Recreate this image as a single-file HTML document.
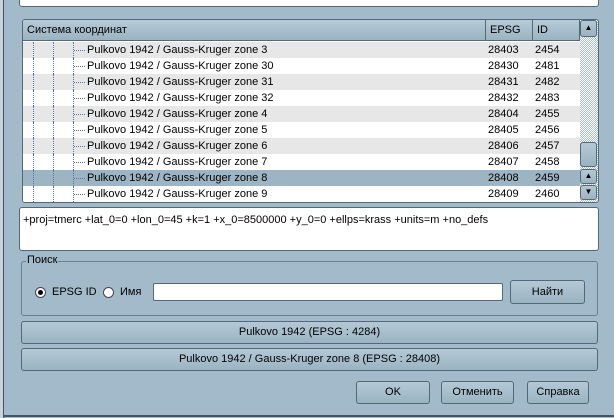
<!DOCTYPE html>
<html><head><meta charset="utf-8"><style>
*{box-sizing:border-box;margin:0;padding:0}
body{width:614px;height:418px;overflow:hidden;background:#a2bac9;font-family:"Liberation Sans","DejaVu Sans",sans-serif;font-size:11px;color:#000;position:relative}
.abs{position:absolute}
.btn{position:absolute;border:1px solid #55687a;border-radius:3px;background:linear-gradient(#b4c9d6,#9bb3c2);text-align:center;line-height:21px}
.row{position:absolute;left:1px;width:557px;height:16px;line-height:16px}
.cell{position:absolute;top:0}
</style></head><body>
<div class="abs" style="left:0;top:0;width:4px;height:418px;background:#c9d3dc"></div>
<div class="abs" style="left:3px;top:0;width:1px;height:418px;background:#445566"></div>
<div class="abs" style="left:3px;top:415px;width:611px;height:2px;background:#445566"></div>
<div class="abs" style="left:19px;top:-3px;width:580px;height:10px;background:#fff;border:1px solid #55687a;border-radius:3px"></div>
<!-- table -->
<div class="abs" style="left:22px;top:19px;width:577px;height:184px;border:1px solid #55687a;border-radius:3px;background:#fff;overflow:hidden">
 <div class="abs" style="left:0;top:0;width:463px;height:21px;background:linear-gradient(#b6cad7,#9bb3c2);border-right:1px solid #55687a;border-bottom:1px solid #55687a;padding-left:4px;line-height:21px">Система координат</div>
 <div class="abs" style="left:463px;top:0;width:47px;height:21px;background:linear-gradient(#b6cad7,#9bb3c2);border-right:1px solid #55687a;border-bottom:1px solid #55687a;padding-left:4px;line-height:21px">EPSG</div>
 <div class="abs" style="left:510px;top:0;width:47px;height:21px;background:linear-gradient(#b6cad7,#9bb3c2);border-right:1px solid #55687a;border-bottom:1px solid #55687a;padding-left:4px;line-height:21px">ID</div>
 <div class="abs" style="left:557px;top:0;width:18px;height:182px;background:repeating-conic-gradient(#a9bfcc 0 25%,#fff 0 50%) 0 0/2px 2px"></div>
 <div class="btn" style="left:557px;top:0;width:17px;height:17px;line-height:14px;font-size:8px">▲</div>
 <div class="btn" style="left:557px;top:122px;width:17px;height:25px"></div>
 <div class="btn" style="left:557px;top:149px;width:17px;height:15px;line-height:12px;font-size:8px">▲</div>
 <div class="btn" style="left:557px;top:165px;width:17px;height:15px;line-height:12px;font-size:8px">▼</div>
 <div id="rows"></div>
</div>
<div class="abs" style="left:19px;top:207px;width:580px;height:44px;background:#fff;border:1px solid #55687a;border-radius:3px;padding:6px 0 0 3px">+proj=tmerc +lat_0=0 +lon_0=45 +k=1 +x_0=8500000 +y_0=0 +ellps=krass +units=m +no_defs</div>
<div class="abs" style="left:21px;top:261px;width:577px;height:55px;border:1px solid #6a7f90;border-radius:3px"></div>
<div class="abs" style="left:26px;top:254px;background:#a2bac9;padding:0 1px">Поиск</div>
<div class="abs" style="left:35px;top:287px;width:11px;height:11px;border-radius:50%;background:#fff;border:1px solid #445"></div>
<div class="abs" style="left:38px;top:290px;width:5px;height:5px;border-radius:50%;background:#000"></div>
<div class="abs" style="left:52px;top:286px">EPSG ID</div>
<div class="abs" style="left:103px;top:287px;width:11px;height:11px;border-radius:50%;background:#fff;border:1px solid #445"></div>
<div class="abs" style="left:120px;top:286px">Имя</div>
<div class="abs" style="left:153px;top:283px;width:350px;height:18px;background:#fff;border:1px solid #55687a;border-radius:2px"></div>
<div class="btn" style="left:510px;top:280px;width:75px;height:24px;line-height:22px">Найти</div>
<div class="btn" style="left:21px;top:321px;width:577px;height:23px">Pulkovo 1942 (EPSG : 4284)</div>
<div class="btn" style="left:21px;top:348px;width:577px;height:23px">Pulkovo 1942 / Gauss-Kruger zone 8 (EPSG : 28408)</div>
<div class="btn" style="left:356px;top:381px;width:74px;height:23px">OK</div>
<div class="btn" style="left:441px;top:381px;width:73px;height:23px">Отменить</div>
<div class="btn" style="left:527px;top:381px;width:62px;height:23px">Справка</div>
<script>
var d=[["3",28403,2454],["30",28430,2481],["31",28431,2482],["32",28432,2483],["4",28404,2455],["5",28405,2456],["6",28406,2457],["7",28407,2458],["8",28408,2459],["9",28409,2460]];
var h="";d.forEach(function(r,i){var bg=i==8?"#9cb4c3":(i%2==0?"#e7e7e7":"#fff");
h+='<div class="row" style="top:'+(22+i*16)+'px;left:0;background:'+bg+'">'+
'<div class="cell" style="left:10px;height:16px;border-left:1px dotted #5577aa"></div>'+
'<div class="cell" style="left:30px;height:16px;border-left:1px dotted #5577aa"></div>'+
'<div class="cell" style="left:50px;height:16px;border-left:1px dotted #5577aa"></div>'+
'<div class="cell" style="left:51px;top:8px;width:11px;border-top:1px dotted #5577aa"></div>'+
'<div class="cell" style="left:64px">Pulkovo 1942 / Gauss-Kruger zone '+r[0]+'</div>'+
'<div class="cell" style="left:465px">'+r[1]+'</div><div class="cell" style="left:512px">'+r[2]+'</div></div>';});
document.getElementById("rows").innerHTML=h;
</script>
</body></html>
